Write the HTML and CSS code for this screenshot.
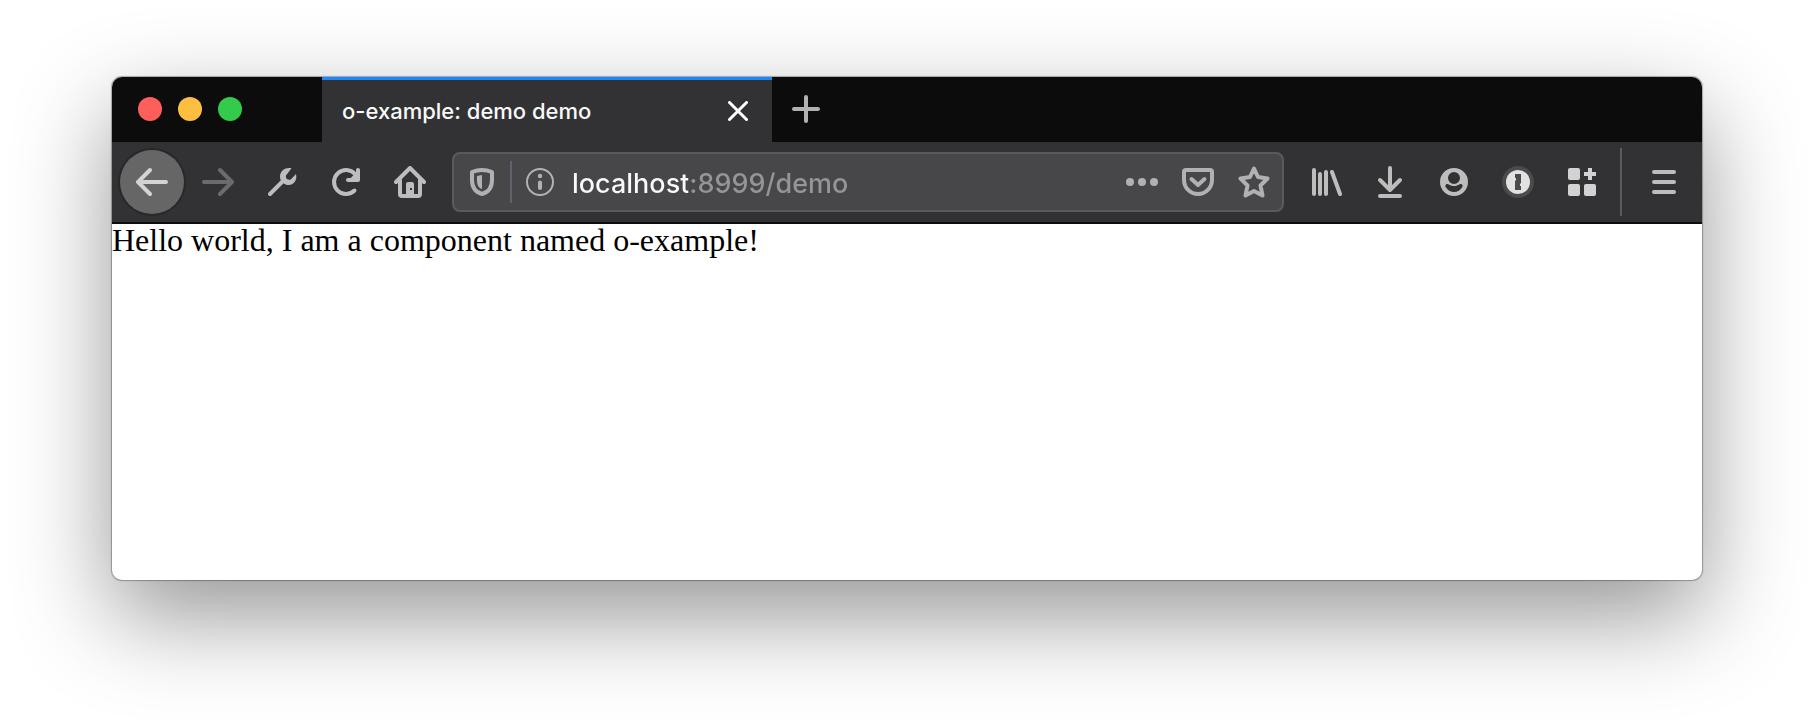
FILE: index.html
```html
<!DOCTYPE html>
<html lang="en">
<head>
<meta charset="utf-8">
<title>o-example: demo demo</title>
<link rel="stylesheet" href="styles.css">
</head>
<body>
<div class="window">
  <header class="titlebar">
    <div class="lights">
      <button class="light light-close" aria-label="Close window"></button>
      <button class="light light-minimise" aria-label="Minimise window"></button>
      <button class="light light-zoom" aria-label="Zoom window"></button>
    </div>
    <div class="tab">
      <span class="tab-title">o-example: demo demo</span>
      <button class="icon-button tab-close" aria-label="Close tab">
        <svg width="20" height="20" viewBox="0 0 20 20"><path d="M1.5 1.5l17 17M18.5 1.5l-17 17" stroke-width="3"/></svg>
      </button>
    </div>
    <button class="icon-button new-tab" aria-label="New tab">
      <svg width="28" height="28" viewBox="0 0 28 28"><path d="M14 2v24M2 14h24" stroke-width="4"/></svg>
    </button>
  </header>
  <nav class="toolbar" aria-label="Navigation">
    <button class="icon-button tool back" aria-label="Back">
      <svg width="32" height="32" viewBox="0 0 32 32"><path d="M30 16H2M14 4L2 16l12 12" stroke-width="4"/></svg>
    </button>
    <button class="icon-button tool forward" aria-label="Forward" disabled>
      <svg width="32" height="32" viewBox="0 0 32 32"><path d="M2 16h28M18 4l12 12-12 12" stroke-width="4"/></svg>
    </button>
    <button class="icon-button tool" aria-label="Developer tools">
      <svg width="32" height="32" viewBox="0 0 32 32"><path d="M4 28L18 14" stroke-width="4"/><path class="solid" d="M25.500 2.300C20 1 14 4.500 14 10.500c0 2 .5 3 1 4l3.500 3.500c1 .5 2 1 4 1 5.500 0 9-5 7.500-11l-5 5.200c-1.500 1.300-4.500.3-5-1.700-.3-1.300 0-2.200.8-3z"/></svg>
    </button>
    <button class="icon-button tool" aria-label="Reload">
      <svg width="32" height="32" viewBox="0 0 32 32"><path d="M24.500 24.500A12 12 0 1 1 25 8" stroke-width="4"/><path d="M28 4v10H18" stroke-width="4"/><path class="solid" d="M28 4v10H19z"/></svg>
    </button>
    <button class="icon-button tool" aria-label="Home">
      <svg width="32" height="32" viewBox="0 0 32 32"><path d="M2 16L16 2l14 14M6 14v14q0 2 2 2h16q2 0 2-2V14" stroke-width="4"/><path class="solid" fill-rule="evenodd" d="M12 30V18q0-2 2-2h4q2 0 2 2v12zM16 22h2v2h-2z"/></svg>
    </button>
    <div class="urlbar">
      <button class="icon-button shield" aria-label="Tracking protection">
        <svg width="24" height="28" viewBox="0 0 24 28"><path d="M12 2Q17 2 22 4v8c0 7-3 12-10 14C5 24 2 19 2 12V4Q7 2 12 2z" stroke-width="4"/><path class="solid" d="M12 7v14c-4-1-5-5-5-9V8z"/></svg>
      </button>
      <span class="url-divider"></span>
      <button class="icon-button info" aria-label="Site information">
        <svg width="28" height="28" viewBox="0 0 28 28"><circle cx="14" cy="14" r="13" stroke-width="2"/><circle class="solid" cx="14" cy="8" r="2.200"/><path d="M14 14.500v5.500" stroke-width="4"/></svg>
      </button>
      <input class="url" type="text" aria-label="Address" value="localhost:8999/demo" spellcheck="false">
      <button class="icon-button action" aria-label="Page actions">
        <svg width="32" height="32" viewBox="0 0 32 32"><g class="solid"><circle cx="4" cy="16" r="4"/><circle cx="16" cy="16" r="4"/><circle cx="28" cy="16" r="4"/></g></svg>
      </button>
      <button class="icon-button action" aria-label="Save to Pocket">
        <svg width="32" height="32" viewBox="0 0 32 32"><path d="M4 4h24q2 0 2 2v8a14 14 0 0 1-28 0V6q0-2 2-2z" stroke-width="4"/><path d="M9.500 13l6.500 6 6.500-6" stroke-width="4"/></svg>
      </button>
      <button class="icon-button action" aria-label="Bookmark this page">
        <svg width="32" height="32" viewBox="0 0 32 32"><path d="M16 2.500l4 8.500 9.500 1.500-7 7 2 10L16 25l-8.500 4.500 2-10-7-7L12 11z" stroke-width="4"/></svg>
      </button>
    </div>
    <button class="icon-button tool" aria-label="Library">
      <svg width="32" height="32" viewBox="0 0 32 32"><path d="M4 4v24M10 8v20M16 6v22M22 6l8 22" stroke-width="4"/></svg>
    </button>
    <button class="icon-button tool" aria-label="Downloads">
      <svg width="32" height="32" viewBox="0 0 32 32"><path d="M16 2v22M6 14l10 10 10-10M6 30h20" stroke-width="4"/></svg>
    </button>
    <button class="icon-button tool" aria-label="Account">
      <svg width="28" height="28" viewBox="0 0 28 28"><path class="solid" fill-rule="evenodd" d="M14 0a14 14 0 1 0 0 28 14 14 0 0 0 0-28zM14 4a6 6 0 1 1 0 12 6 6 0 0 1 0-12zM8 16c4 2.700 8 2.700 12 0 2-.5 3.500 1.500 2 3.500-4 6-12 6-16 0-1.500-2 0-4 2-3.500z"/></svg>
    </button>
    <button class="icon-button tool" aria-label="Password manager">
      <svg width="32" height="32" viewBox="0 0 32 32"><circle class="badge-ring" cx="16" cy="16" r="16"/><circle class="badge-face" cx="16" cy="16" r="12"/><path class="badge-key" d="M13 8h6v9l-1 1v2h1v4h-6v-9l1-1v-2h-1z"/></svg>
    </button>
    <button class="icon-button tool extensions" aria-label="Extensions">
      <svg width="28" height="28" viewBox="0 0 28 28"><g class="solid"><rect width="12" height="12" rx="2"/><rect y="16" width="12" height="12" rx="2"/><rect x="16" y="16" width="12" height="12" rx="2"/><path d="M20 0h4v4h4v4h-4v4h-4V8h-4V4h4z"/></g></svg>
    </button>
    <span class="menu-divider"></span>
    <button class="icon-button tool" aria-label="Open menu">
      <svg width="24" height="24" viewBox="0 0 24 24"><path d="M2 2h20M2 12h20M2 22h20" stroke-width="4"/></svg>
    </button>
  </nav>
  <main class="page">Hello world, I am a component named o-example!</main>
</div>
</body>
</html>
```
FILE: styles.css
```css
* {
  box-sizing: border-box;
}

body {
  display: flex;
  min-height: 100vh;
  margin: 0;
  padding: 77px 112px 148px;
  background: #fff;
}

button {
  padding: 0;
  border: 0;
  background: none;
}

.window {
  display: flex;
  flex: 1;
  flex-direction: column;
  min-width: 0;
  overflow: hidden;
  border-radius: 10px;
  background: #fff;
  box-shadow: 0 0 1px 1px rgba(0, 0, 0, 0.3), 0 36px 96px rgba(0, 0, 0, 0.42);
}

.titlebar {
  display: flex;
  height: 65px;
  background: #0c0c0d;
}

.lights {
  display: flex;
  align-items: center;
  gap: 16px;
  width: 210px;
  padding: 0 0 2px 26px;
}

.light {
  width: 24px;
  height: 24px;
  border-radius: 50%;
}

.light-close {
  background: #fe5f5a;
}

.light-minimise {
  background: #febe3f;
}

.light-zoom {
  background: #34ca4b;
}

.tab {
  display: flex;
  align-items: center;
  justify-content: space-between;
  width: 450px;
  padding: 0 24px 0 20px;
  border-top: 3px solid #1988fb;
  background: #323234;
}

.tab-title {
  color: #f9f9fa;
  font: 500 22px/28px Inter, sans-serif;
}

.icon-button {
  display: flex;
  flex: none;
  align-items: center;
  justify-content: center;
  color: #bdbdbe;
}

.icon-button svg {
  fill: none;
  stroke: currentColor;
  stroke-linecap: round;
  stroke-linejoin: round;
}

.icon-button .solid {
  fill: currentColor;
  stroke: none;
}

.tab-close {
  color: #fff;
}

.new-tab {
  width: 68px;
  padding-bottom: 2px;
  color: #b1b1b3;
}

.toolbar {
  display: flex;
  align-items: center;
  height: 82px;
  padding: 0 6px 0 8px;
  border-bottom: 2px solid #0c0c0d;
  background: #323234;
}

.tool {
  width: 64px;
  height: 64px;
}

.back {
  margin-right: 2px;
  border-radius: 50%;
  background: #666667;
  color: #d3d3d3;
  box-shadow: 0 0 0 2px #28282a;
}

.forward {
  color: #6b6b6d;
}

.urlbar {
  display: flex;
  flex: 1;
  align-items: center;
  min-width: 0;
  height: 60px;
  margin: 0 10px 0 10px;
  padding: 0 0 0 16px;
  border: 2px solid #5a5a5c;
  border-radius: 8px;
  background: #474749;
}

.urlbar .icon-button {
  color: #b1b1b3;
}

.url-divider {
  width: 2px;
  height: 42px;
  margin: 0 14px 0 16px;
  background: #5e626b;
}

.info {
  margin-right: 18px;
}

/* The host part is drawn brighter than the port and path. */
.url {
  flex: 1;
  min-width: 0;
  height: 42px;
  padding: 2px 0 0;
  border: 0;
  outline: 0;
  background: linear-gradient(90deg, #f9f9fa 116px, #959597 116px);
  background-clip: text;
  color: #f9f9fa;
  font: 500 27px/40px Inter, sans-serif;
  -webkit-text-fill-color: transparent;
}

.action {
  width: 56px;
  height: 56px;
}

.badge-ring {
  fill: #4b4b4d;
  stroke: none;
}

.badge-face {
  fill: #e2e2e2;
  stroke: none;
}

.badge-key {
  fill: #4b4b4d;
  stroke: none;
}

.extensions {
  color: #d2d2d3;
}

.menu-divider {
  width: 2px;
  height: 68px;
  margin: 0 10px 0 6px;
  background: #5c5c5e;
}

.page {
  flex: 1;
  color: #000;
  font: 32px/32px "Liberation Serif", serif;
}
```
